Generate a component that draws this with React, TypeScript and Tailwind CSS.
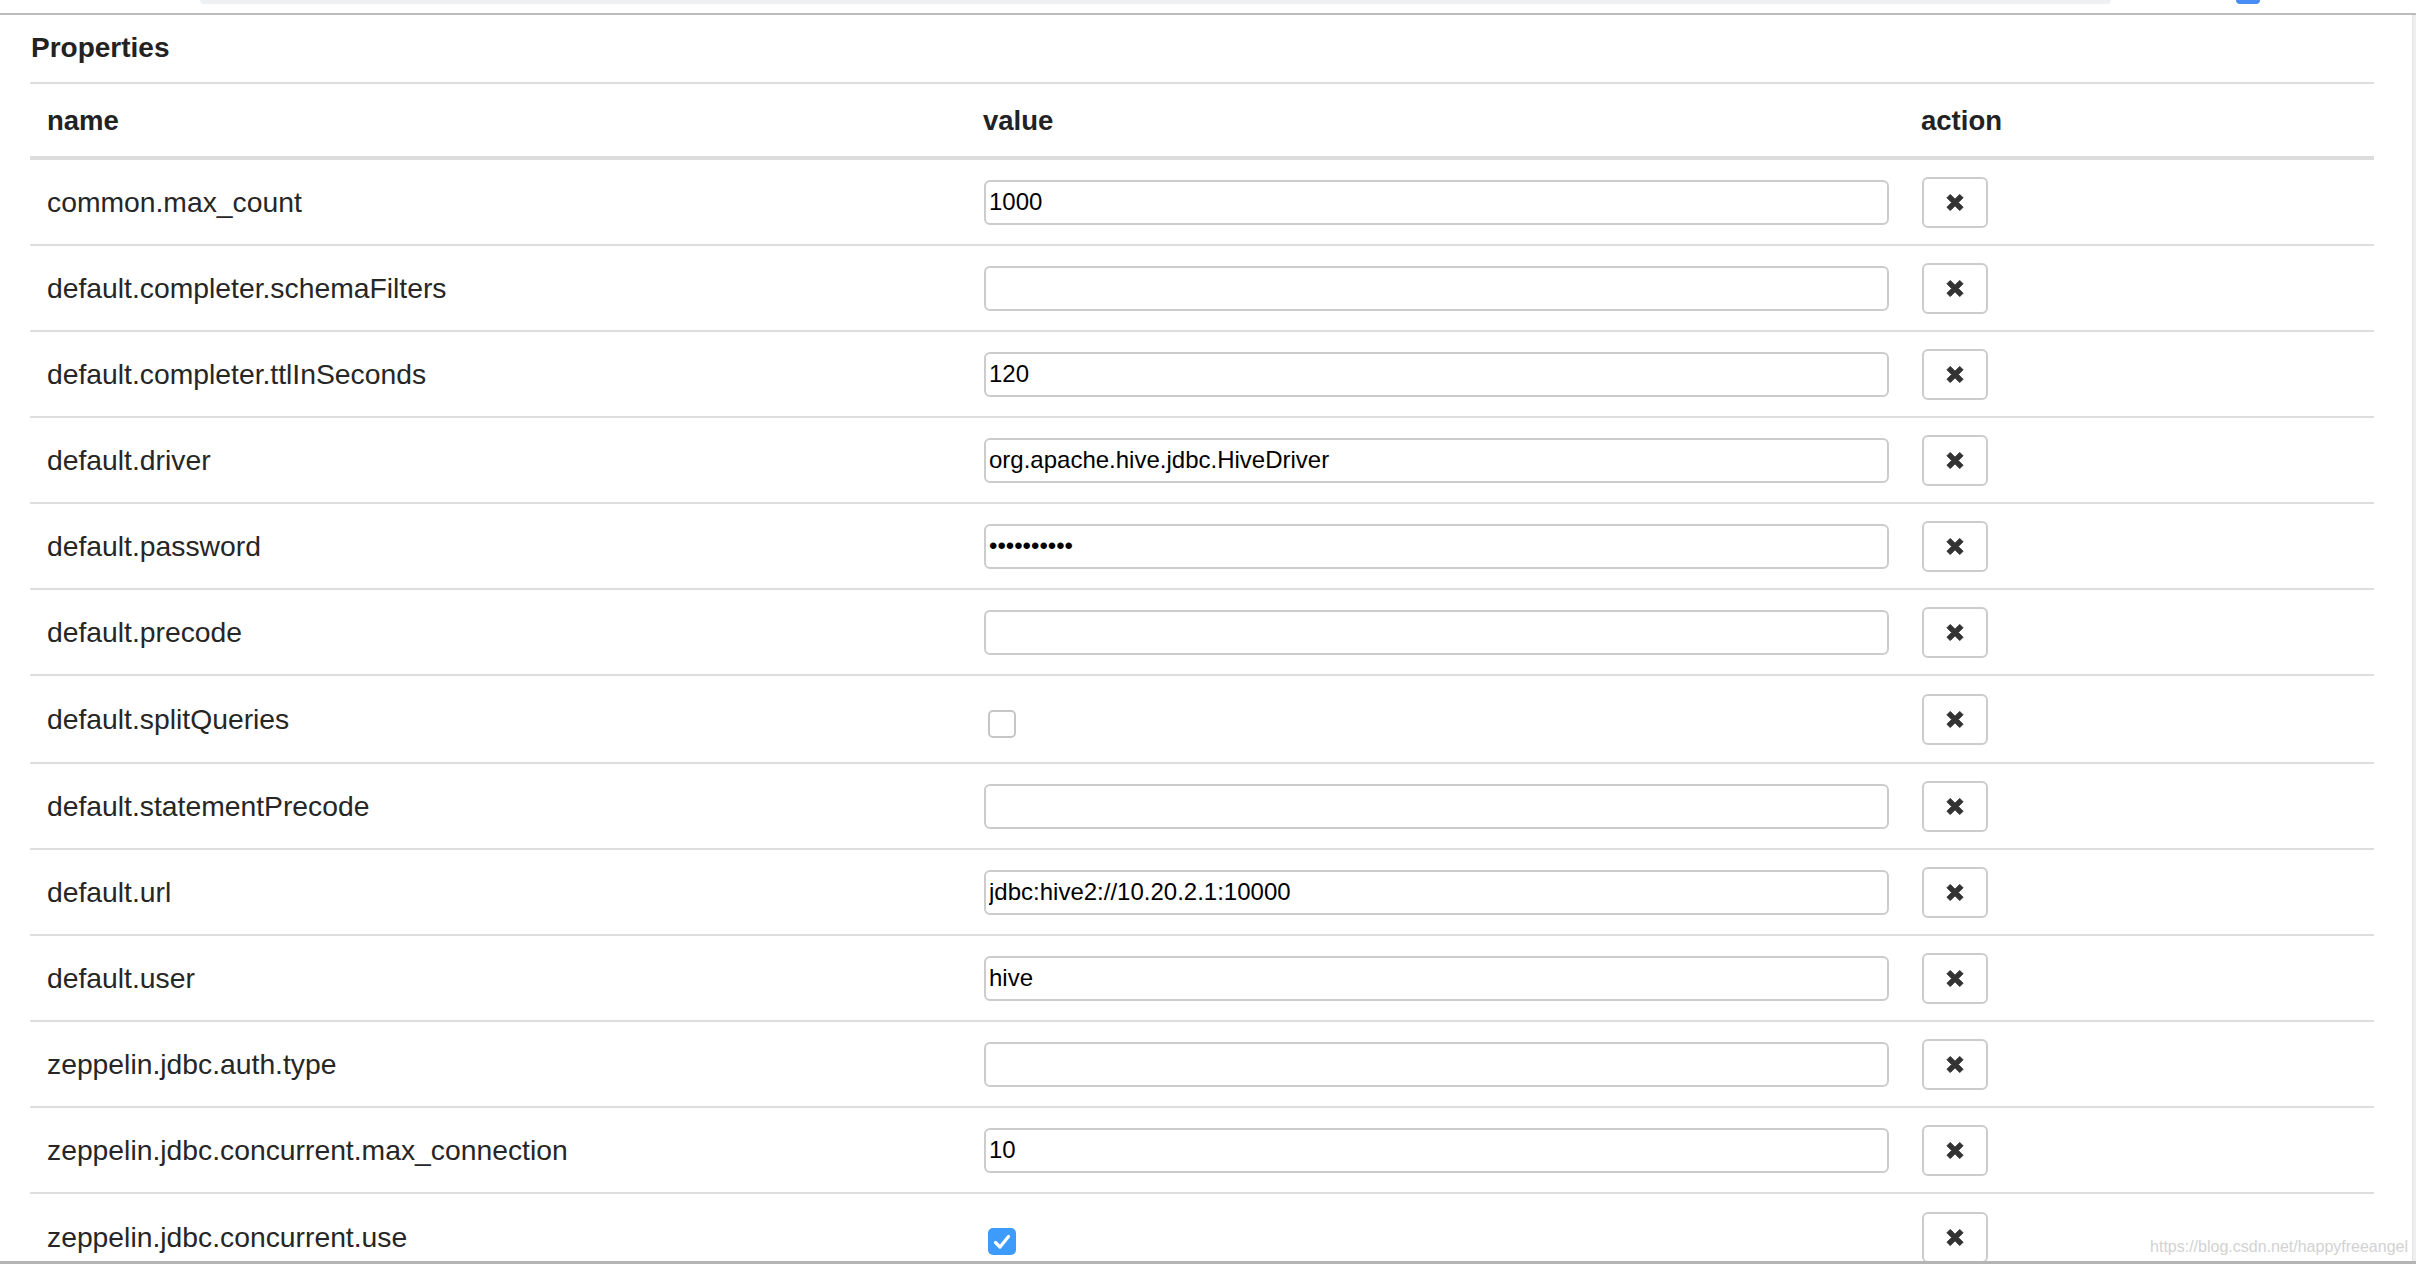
import React from "react";

type Row = {
  name: string;
  value?: string;
  type?: "text" | "password" | "checkbox";
  checked?: boolean;
};

const rows: Row[] = [
  { name: "common.max_count", value: "1000" },
  { name: "default.completer.schemaFilters", value: "" },
  { name: "default.completer.ttlInSeconds", value: "120" },
  { name: "default.driver", value: "org.apache.hive.jdbc.HiveDriver" },
  { name: "default.password", value: "hivehive12", type: "password" },
  { name: "default.precode", value: "" },
  { name: "default.splitQueries", type: "checkbox", checked: false },
  { name: "default.statementPrecode", value: "" },
  { name: "default.url", value: "jdbc:hive2://10.20.2.1:10000" },
  { name: "default.user", value: "hive" },
  { name: "zeppelin.jdbc.auth.type", value: "" },
  { name: "zeppelin.jdbc.concurrent.max_connection", value: "10" },
  { name: "zeppelin.jdbc.concurrent.use", type: "checkbox", checked: true },
];

const RemoveIcon = () => (
  <svg width="20" height="19" viewBox="0 0 20 20">
    <polygon
      points="1.5,5 5,1.5 10,6.5 15,1.5 18.5,5 13.5,10 18.5,15 15,18.5 10,13.5 5,18.5 1.5,15 6.5,10"
      fill="#333333"
      stroke="#333333"
      strokeWidth="1"
      strokeLinejoin="round"
    />
  </svg>
);

const CheckBox = ({ checked }: { checked?: boolean }) =>
  checked ? (
    <span className="mt-[9px] flex h-[27px] w-[28px] items-center justify-center rounded-[5px] bg-[#3d9bfc]">
      <svg width="20" height="18" viewBox="0 0 20 18">
        <path d="M3.5 9.5 L8 14 L16.5 3.5" fill="none" stroke="#ffffff" strokeWidth="3.2" strokeLinecap="round" strokeLinejoin="round" />
      </svg>
    </span>
  ) : (
    <span className="mt-[9px] block h-[28px] w-[28px] rounded-[5px] border-2 border-[#c6c6c6] bg-white" />
  );

export default function App() {
  return (
    <div className="relative flex h-[1264px] w-[2416px] flex-col overflow-hidden bg-white font-['Liberation_Sans',Arial,sans-serif] text-[#262626]">
      {/* top strip */}
      <div className="flex h-[13px] shrink-0 items-start">
        <div className="ml-[200px] h-[4px] w-[1911px] rounded-b-[10px] bg-[#eff0f2]" />
        <div className="ml-[125px] h-[4px] w-[24px] rounded-b-[4px] bg-[#4a8cf6]" />
      </div>

      <div className="flex min-h-0 flex-1 border-t-2 border-[#bcbcbc]">
        <div className="min-w-0 flex-1 pl-[30px]">
          <div className="w-[2344px]">
            <h3 className="pl-[1px] pt-[17px] pb-[18px] text-[28px] font-bold leading-[32px] text-[#222]">Properties</h3>

            <div className="grid h-[78px] grid-cols-[938px_938px_468px] items-center border-t-2 border-b-4 border-[#dddddd] pt-[2px] text-[27.5px] font-bold leading-[32px] text-[#222]">
              <div className="pl-[17px]">name</div>
              <div className="pl-[15px]">value</div>
              <div className="pl-[15px]">action</div>
            </div>

            {rows.map((r) => (
              <div
                key={r.name}
                className={`grid grid-cols-[938px_938px_468px] items-center border-b-2 border-[#dddddd] ${
                  r.type === "checkbox" ? "h-[88px]" : "h-[86px]"
                }`}
              >
                <div className="pl-[17px] text-[28.3px] leading-[32px]">{r.name}</div>
                <div className="flex items-center pl-[16px]">
                  {r.type === "checkbox" ? (
                    <div className="pl-[4px]">
                      <CheckBox checked={r.checked} />
                    </div>
                  ) : (
                    <input
                      type={r.type === "password" ? "password" : "text"}
                      defaultValue={r.value}
                      readOnly
                      className="h-[45px] w-[905px] rounded-[6px] border-2 border-[#cccccc] bg-white pl-[3px] font-['Liberation_Sans',Arial,sans-serif] text-[24px] text-black outline-none"
                    />
                  )}
                </div>
                <div className="pl-[16px]">
                  <button className="flex h-[51px] w-[66px] items-center justify-center rounded-[6px] border-2 border-[#cccccc] bg-white">
                    <RemoveIcon />
                  </button>
                </div>
              </div>
            ))}
          </div>
        </div>
        <div className="w-[4px] shrink-0 border-l border-[#e2e2e2] bg-[#efefef]" />
      </div>

      <div className="h-[3px] shrink-0 bg-[#b4b4b4]" />

      <div className="absolute bottom-[8px] right-[8px] text-[16px] leading-[18px] text-[#d2d2d2]">
        https://blog.csdn.net/happyfreeangel
      </div>
    </div>
  );
}
